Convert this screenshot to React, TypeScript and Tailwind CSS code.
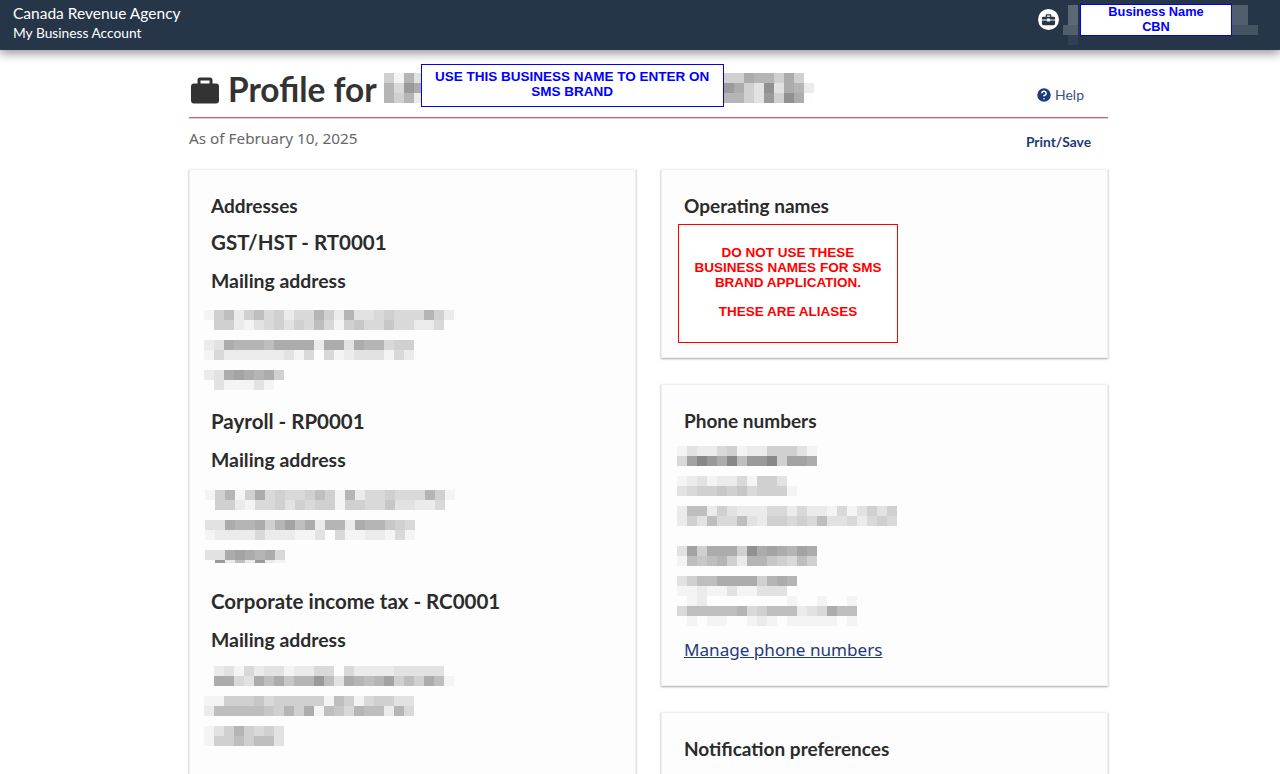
import { HelpCircle } from "lucide-react";

// one char per 10px cell, 0 = darkest, f = almost white, "." = empty
function Mosaic({ rows, lastH }: { rows: string[]; lastH?: number }) {
  return (
    <div className="flex flex-col">
      {rows.map((row, i) => (
        <div
          key={i}
          className="flex"
          style={{ height: lastH && i === rows.length - 1 ? lastH : 10 }}
        >
          {row.split("").map((c, j) => (
            <div
              key={j}
              className="w-[10px] shrink-0"
              style={{
                backgroundColor:
                  c === "."
                    ? "transparent"
                    : `rgb(${118 + parseInt(c, 16) * 9},${118 + parseInt(c, 16) * 9},${118 + parseInt(c, 16) * 9})`,
              }}
            />
          ))}
        </div>
      ))}
    </div>
  );
}

const addressOne = [
  "ea8da8badbb7ad7ccbabbb7ad",
  "faadecbacab8bea9bb9bbddbf",
  "",
  "dc677786666d66c677baa",
  "ebddddddcebfbedcccebd",
  "fffffff",
  "dc65676a",
  "fceeecef",
];
const addressTwo = [
  "ea7ea6babba8ae7dbbabbb7ae",
  "faadebbacabaaeaabb9ccddb",
  "",
  "cc6776a7586d77d6779ab",
  "eddddbdddeecfbeeddebe",
  "fffffff",
  "cc65676b",
  "f4d8d4de",
];
const addressThree = [
  "fdcebdcceddbbfbddddcccccf",
  "f66bc68697748c67875a8a68e",
  "",
  "eeaaa9baaaaae8aebaacc",
  "d888889a7a6e89b788d7b",
  "",
  "eca7abac",
  "eaa8a88c",
];
const phones = [
  "ecddbaeddaaace",
  "b524628442a556",
  "",
  "edceddbeaacf",
  "cbaa9a9baaae",
  "",
  "d88dacdddbbdbddebecaca",
  "dac8bb8cdaabab8ccbdbab",
  "",
  "",
  "c5a666a3656756",
  "e8987ad779ab8a",
  "",
  "ca886666a767",
  "eedeeceecccf",
  "fedffffffffeffeffe",
  "b888887ba888dcb688",
  "fefeeffedefeeeeefe",
];

function Card({ children, className }: { children: React.ReactNode; className?: string }) {
  return (
    <section
      className={`bg-[#fdfdfd] border border-[#f0f0f0] shadow-[0_1px_2px_rgba(0,0,0,0.35)] pr-4 pt-[24px] ${className ?? ""}`}
    >
      {children}
    </section>
  );
}

function AddressBlock({
  title,
  rows,
  lastH,
  mosaicClass,
}: {
  title: string;
  rows: string[];
  lastH?: number;
  mosaicClass: string;
}) {
  return (
    <>
      <h3 className="text-[20.5px] leading-[28px] font-bold text-[#2b2b2b]">{title}</h3>
      <h4 className="mt-[13px] text-[19.4px] leading-[24px] font-bold text-[#2b2b2b]">Mailing address</h4>
      <div className={mosaicClass}>
        <Mosaic rows={rows} lastH={lastH} />
      </div>
    </>
  );
}

export default function App() {
  return (
    <div className="h-[774px] overflow-hidden bg-white font-['Lato',sans-serif] text-[#2b2b2b]">
      <header className="h-[50px] bg-[#263648] shadow-[0_3px_10px_rgba(0,0,0,0.45)] flex justify-between pl-[13px] pr-[22px] relative z-10">
        <div className="text-white pt-[3px]">
          <p className="text-[15.5px] leading-[20px]">Canada Revenue Agency</p>
          <p className="text-[13.75px] leading-[20px]">My Business Account</p>
        </div>
        <div className="flex items-start">
          <div className="mt-[9px] size-[21px] rounded-full bg-white flex items-center justify-center mr-[4px]">
            <svg viewBox="0 0 16 16" className="size-[15px] fill-[#263648]">
              <path d="M6 2.5h4a1 1 0 0 1 1 1V5h2.500A1.500 1.500 0 0 1 15 6.500V8H9.500V7h-3v1H1V6.500A1.500 1.500 0 0 1 2.500 5H5V3.500a1 1 0 0 1 1-1zm.3 1.200V5h3.400V3.700H6.300zM1 9h5.500v1h3V9H15v3.500a1.500 1.500 0 0 1-1.500 1.500h-11A1.500 1.500 0 0 1 1 12.500V9z" />
            </svg>
          </div>
          <div className="relative mt-[5px] w-[195px] h-[40px]">
            <div className="absolute left-0 top-0 flex flex-col">
              <div className="ml-[5px] w-[10px] h-[20px] bg-white/25" />
              <div className="w-[15px] h-[10px] bg-white/20" />
              <div className="ml-[5px] w-[10px] h-[10px] bg-white/5" />
            </div>
            <div className="absolute right-0 top-0 w-[26px] h-[30px]">
              <div className="w-[16px] h-[20px] bg-white/20" />
              <div className="w-[26px] h-[10px] bg-white/15" />
            </div>
            <div className="absolute left-[17px] -top-[1px] w-[152px] h-[32px] bg-white border border-[#0000ff] text-center text-[12.8px] leading-[15px] font-bold font-['Liberation_Sans',sans-serif] text-[#0000ff]">
              <span className="block -mt-[1px]">
                Business Name
                <br />
                CBN
              </span>
            </div>
          </div>
        </div>
      </header>

      <main className="w-[919px] ml-[189px]">
        <div className="relative h-[68px] border-b border-[#c4666e] shadow-[0_1px_0_rgba(200,100,110,0.35)] flex items-start justify-between">
          <div className="flex items-start">
            <svg viewBox="0 0 28 26" className="ml-[2px] mt-[27px] w-[28px] h-[27px] fill-[#333]">
              <path d="M9 0h10a2.500 2.500 0 0 1 2.500 2.500V6h3.500A3 3 0 0 1 28 9v14a3 3 0 0 1-3 3H3a3 3 0 0 1-3-3V9a3 3 0 0 1 3-3h3.500V2.500A2.500 2.500 0 0 1 9 0zm.5 3v3h9V3h-9z" />
            </svg>
            <h1 className="ml-[9px] mt-[17px] text-[33.4px] leading-[44px] font-bold text-[#333] whitespace-nowrap">Profile for</h1>
            <div className="relative ml-[7px] mt-[23px]">
              <div className="flex">
                <Mosaic rows={["ae7c", "7b46", "7a7d"]} />
                <div className="w-[300px]" />
                <Mosaic rows={["aa677a6a.", "46ac3c67d", "77ac4a36f"]} />
              </div>
              <div className="absolute left-[37px] -top-[9px] w-[303px] h-[43px] bg-white border border-[#0000ff] text-center text-[13.5px] leading-[15px] font-bold font-['Liberation_Sans',sans-serif] text-[#0000ff] pt-[4px]">
                USE THIS BUSINESS NAME TO ENTER ON
                <br />
                SMS BRAND
              </div>
            </div>
          </div>
          <a className="mr-[24px] mt-[35px] flex items-center gap-[2px] text-[14px] leading-[20px] text-[#3d4f7c]">
            <HelpCircle className="size-[18px] fill-[#1f3a7a] stroke-white" />
            Help
          </a>
        </div>

        <div className="flex justify-between h-[51px]">
          <p className="mt-[10px] text-[15.3px] leading-[20px] text-[#666] font-['Noto_Sans',sans-serif]">As of February 10, 2025</p>
          <a className="mr-[17px] mt-[15px] text-[13.8px] leading-[18px] font-bold text-[#1f3a7a]">Print/Save</a>
        </div>

        <div className="grid grid-cols-[447px_447px] gap-x-[25px] items-start">
          <Card className="pl-[21px] h-[700px]">
            <h2 className="text-[19px] leading-[24px] font-bold text-[#2b2b2b] mb-[10px]">Addresses</h2>
            <AddressBlock title="GST/HST - RT0001" rows={addressOne} mosaicClass="mt-[17px] -ml-[7px]" />
            <div className="mt-[17px]">
              <AddressBlock title="Payroll - RP0001" rows={addressTwo} lastH={3} mosaicClass="mt-[18px] -ml-[6px]" />
            </div>
            <div className="mt-[24px]">
              <AddressBlock title="Corporate income tax - RC0001" rows={addressThree} mosaicClass="mt-[14px] -ml-[7px]" />
            </div>
          </Card>

          <div className="flex flex-col gap-[26px]">
            <Card className="pl-[22px] h-[189px]">
              <h2 className="text-[19px] leading-[24px] font-bold">Operating names</h2>
              <div className="-ml-[6px] mt-[6px] w-[220px] h-[119px] border border-[#ff0000] bg-white text-center text-[13.5px] leading-[15px] font-bold font-['Liberation_Sans',sans-serif] text-[#ff0000] pt-[20px] px-[8px]">
                DO NOT USE THESE BUSINESS NAMES FOR SMS BRAND APPLICATION.
                <br />
                <br />
                <span className="block -mt-[1px]">THESE ARE ALIASES</span>
              </div>
            </Card>
            <Card className="pl-[22px] h-[302px]">
              <h2 className="text-[19px] leading-[24px] font-bold">Phone numbers</h2>
              <div className="-ml-[7px] mt-[13px]">
                <Mosaic rows={phones} />
              </div>
              <a className="block mt-[12px] text-[17.1px] leading-[24px] underline text-[#1f3a7a] font-['Noto_Sans',sans-serif]">
                Manage phone numbers
              </a>
            </Card>
            <Card className="pl-[22px] h-[200px]">
              <h2 className="text-[19px] leading-[24px] font-bold">Notification preferences</h2>
            </Card>
          </div>
        </div>
      </main>
    </div>
  );
}
